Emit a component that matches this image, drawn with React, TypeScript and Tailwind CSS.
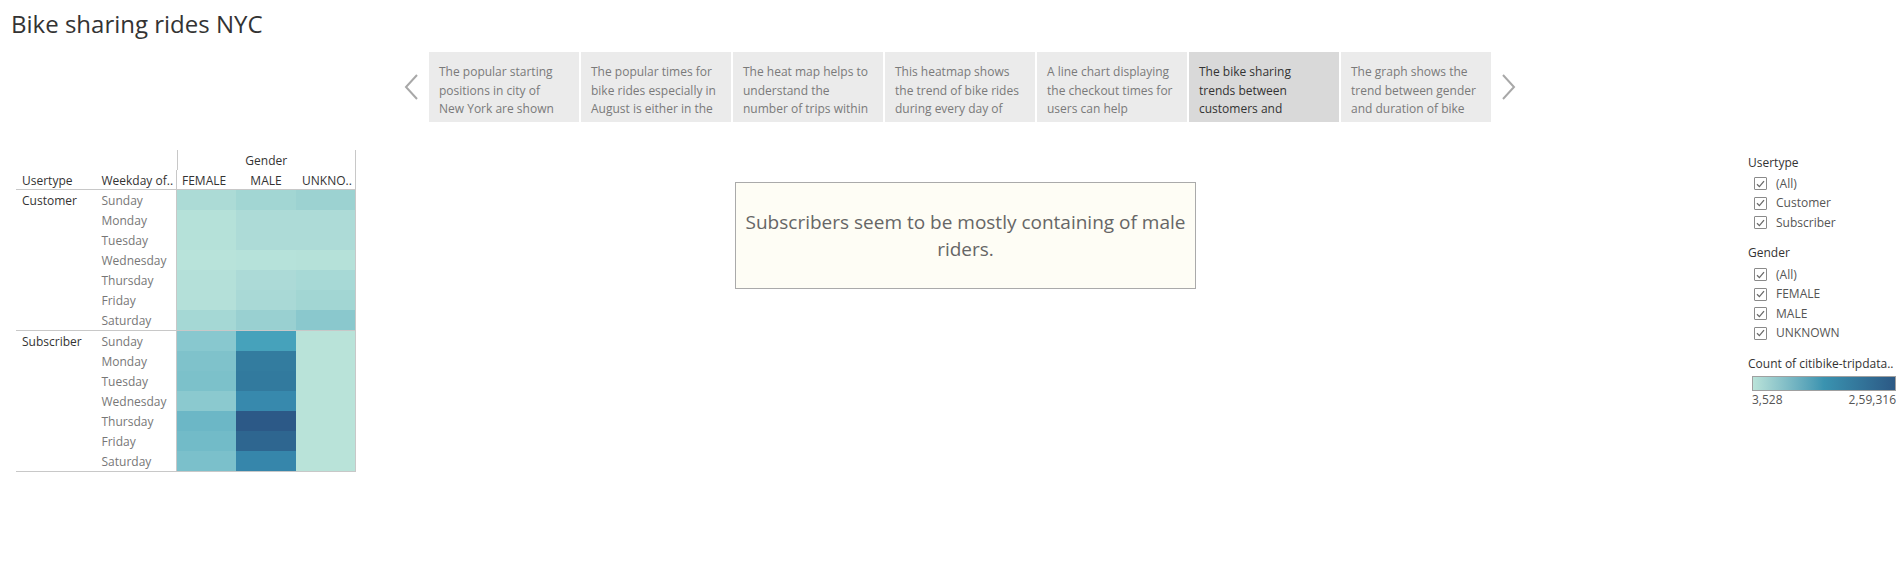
import React from "react";

const font = { fontFamily: '"Open Sans", "Noto Sans", sans-serif' };

const stories = [
  { lines: ["The popular starting", "positions in city of", "New York are shown"] },
  { lines: ["The popular times for", "bike rides especially in", "August is either in the"] },
  { lines: ["The heat map helps to", "understand the", "number of trips within"] },
  { lines: ["This heatmap shows", "the trend of bike rides", "during every day of"] },
  { lines: ["A line chart displaying", "the checkout times for", "users can help"] },
  { lines: ["The bike sharing", "trends between", "customers and"], active: true },
  { lines: ["The graph shows the", "trend between gender", "and duration of bike"] },
];

const days = ["Sunday", "Monday", "Tuesday", "Wednesday", "Thursday", "Friday", "Saturday"];

const customerColors = [
  ["bg-[#acdbd6]", "bg-[#a2d6d3]", "bg-[#9cd2d1]"],
  ["bg-[#b5e1d9]", "bg-[#addbd7]", "bg-[#addbd7]"],
  ["bg-[#b5e1d9]", "bg-[#addbd7]", "bg-[#addbd7]"],
  ["bg-[#b8e3da]", "bg-[#b6e2da]", "bg-[#b5e1d9]"],
  ["bg-[#b4e0d9]", "bg-[#acdad7]", "bg-[#a7d9d6]"],
  ["bg-[#b4e0d9]", "bg-[#a9d9d6]", "bg-[#a2d6d3]"],
  ["bg-[#a5d8d5]", "bg-[#99d0d1]", "bg-[#8ac8cd]"],
];

const subscriberColors = [
  ["bg-[#88c8cf]", "bg-[#46a2bb]", "bg-[#b9e3d9]"],
  ["bg-[#7fc2cb]", "bg-[#337c9f]", "bg-[#b9e3d9]"],
  ["bg-[#7cc1ca]", "bg-[#327a9e]", "bg-[#b9e3d9]"],
  ["bg-[#8bc9cf]", "bg-[#3789ad]", "bg-[#b9e3d9]"],
  ["bg-[#6cb7c6]", "bg-[#2c5987]", "bg-[#b9e3d9]"],
  ["bg-[#72bbc8]", "bg-[#2e6690]", "bg-[#b9e3d9]"],
  ["bg-[#7bc0cb]", "bg-[#3686ab]", "bg-[#b9e3d9]"],
];

function Chevron({ dir }: { dir: "left" | "right" }) {
  return (
    <svg width="16" height="28" viewBox="0 0 16 28" className="shrink-0">
      <path
        d={dir === "left" ? "M14 2 L3 14 L14 26" : "M2 2 L13 14 L2 26"}
        fill="none"
        stroke="#a8a8a8"
        strokeWidth="2"
      />
    </svg>
  );
}

function Check({ label }: { label: string }) {
  return (
    <div className="flex items-center h-[19.6px] pl-[6px] gap-[9px]">
      <div className="w-[13px] h-[13px] border border-[#8a8a8a] rounded-[1px] flex items-center justify-center bg-white">
        <svg width="9" height="8" viewBox="0 0 9 8">
          <path d="M1 4.2 L3.4 6.6 L8 1.2" fill="none" stroke="#6a6a6a" strokeWidth="1.3" />
        </svg>
      </div>
      <span className="text-[12px] text-[#555]">{label}</span>
    </div>
  );
}

function Block({ user, colors }: { user: string; colors: string[][] }) {
  return (
    <div className="flex border-b border-[#c8c8c8]">
      <div className="w-[84px] pl-[6px] translate-y-px text-[12px] text-[#333] leading-[20px]">{user}</div>
      <div className="w-[77px] translate-y-px">
        {days.map((d) => (
          <div key={d} className="h-[20px] leading-[20px] pl-[2px] text-[12px] text-[#777]">
            {d}
          </div>
        ))}
      </div>
      <div className="border-l border-r border-[#c8c8c8]">
        {colors.map((row, i) => (
          <div key={i} className="flex h-[20px]">
            <div className={`w-[59px] ${row[0]}`} />
            <div className={`w-[60px] ${row[1]}`} />
            <div className={`w-[59px] ${row[2]}`} />
          </div>
        ))}
      </div>
    </div>
  );
}

export default function App() {
  return (
    <div className="w-[1898px] h-[584px] bg-white overflow-hidden" style={font}>
      {/* title */}
      <div className="pl-[11px] pt-[8px] h-[52px] text-[24px] leading-[32px] text-[#333]">
        Bike sharing rides NYC
      </div>

      {/* story points */}
      <div className="flex items-center pl-[403px] h-[70px]">
        <Chevron dir="left" />
        <div className="flex gap-[2px] ml-[10px] mr-[10px]">
          {stories.map((s, i) => (
            <div
              key={i}
              className={`w-[150px] h-[70px] pl-[10px] pt-[11px] overflow-hidden ${
                s.active ? "bg-[#d9d9d9] text-[#333]" : "bg-[#ebebeb] text-[#7a7a7a]"
              }`}
            >
              {s.lines.map((l) => (
                <div key={l} className="whitespace-nowrap text-[12px] leading-[18.5px]">
                  {l}
                </div>
              ))}
            </div>
          ))}
        </div>
        <Chevron dir="right" />
      </div>

      {/* dashboard */}
      <div className="flex pt-[28px]">
        {/* heatmap table */}
        <div className="ml-[16px] w-[340px] shrink-0">
          <div className="flex h-[20px]">
            <div className="w-[161px]" />
            <div className="w-[180px] border-l border-r border-[#c8c8c8] text-center text-[12px] leading-[20px] pt-[1px] text-[#333]">
              Gender
            </div>
          </div>
          <div className="flex h-[20px] border-b border-[#c8c8c8] text-[12px] leading-[20px] text-[#333]">
            <div className="w-[84px] pl-[6px] pt-[1px]">Usertype</div>
            <div className="w-[77px] pl-[2px] pt-[1px] whitespace-nowrap">Weekday of..</div>
            <div className="flex border-l border-r border-[#c8c8c8] pt-[1px]">
              <div className="w-[59px] pl-[5px]">FEMALE</div>
              <div className="w-[60px] text-center">MALE</div>
              <div className="w-[59px] pl-[6px] whitespace-nowrap">UNKNO..</div>
            </div>
          </div>
          <Block user="Customer" colors={customerColors} />
          <Block user="Subscriber" colors={subscriberColors} />
        </div>

        {/* annotation */}
        <div className="flex-1 pl-[379px] pt-[32px]">
          <div className="w-[461px] h-[107px] border border-[#aaaaaa] bg-[#fefdf5] flex items-center justify-center text-center px-[8px]">
            <p className="text-[19px] leading-[27px] text-[#666]">
              Subscribers seem to be mostly containing of male riders.
            </p>
          </div>
        </div>

        {/* legends */}
        <div className="w-[150px] shrink-0 pt-[5px]">
          <div className="text-[12px] text-[#333] leading-[16px] mb-[3px]">Usertype</div>
          <Check label="(All)" />
          <Check label="Customer" />
          <Check label="Subscriber" />
          <div className="text-[12px] text-[#333] leading-[16px] mt-[12px] mb-[4px]">Gender</div>
          <Check label="(All)" />
          <Check label="FEMALE" />
          <Check label="MALE" />
          <Check label="UNKNOWN" />
          <div className="text-[12px] text-[#333] leading-[16px] mt-[13px] whitespace-nowrap">
            Count of citibike-tripdata..
          </div>
          <div className="ml-[4px] mt-[4px] w-[144px] h-[15px] border border-[#a0a0a0] bg-gradient-to-r from-[#bae3d9] via-[#3a93b0] to-[#2c5985]" />
          <div className="ml-[4px] w-[144px] flex justify-between text-[12px] text-[#555] leading-[18px]">
            <span>3,528</span>
            <span>2,59,316</span>
          </div>
        </div>
      </div>
    </div>
  );
}
